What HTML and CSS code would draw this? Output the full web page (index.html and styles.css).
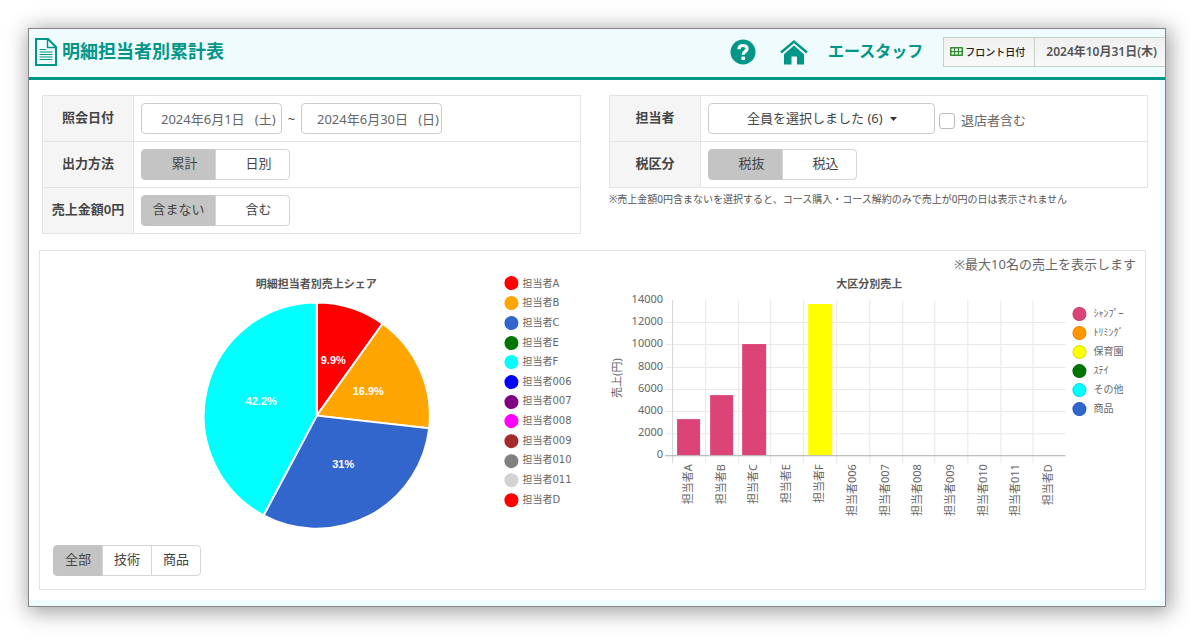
FILE: index.html
```html
<!DOCTYPE html>
<html lang="ja">
<head>
<meta charset="utf-8">
<meta name="viewport" content="width=device-width, initial-scale=1">
<title>明細担当者別累計表</title>
<link rel="stylesheet" href="styles.css">
</head>
<body>
<div class="window">
  <header class="header">
    <svg class="doc-icon" width="22" height="28" viewBox="0 0 22 28" fill="none" stroke="#009688" aria-hidden="true">
      <path d="M1 1H13L21 9V27H1Z" stroke-width="2"/>
      <path d="M12.500 1V9.500H21Z" fill="#fff" stroke-width="1.500"/>
      <path d="M4.500 11.500H11M4.500 14H17.500M4.500 16.500H17.500M4.500 19H17.500M4.500 21.500H17.500" stroke-width="1.200"/>
    </svg>
    <h1 class="title">明細担当者別累計表</h1>
    <nav class="tools">
      <a class="tool" href="#" aria-label="ヘルプ">
        <svg width="26" height="26" viewBox="0 0 26 26" fill="none" aria-hidden="true">
          <circle cx="13" cy="13" r="12.500" fill="#009688"/>
          <path d="M9 10.200C9 7.600 10.700 6.500 13 6.500C15.500 6.500 17.100 7.700 17.100 9.700C17.100 12.500 13.200 12.300 13.200 15.800" stroke="#fff" stroke-width="3.200"/>
          <rect x="11.300" y="17.500" width="3.800" height="3.400" rx="1" fill="#fff"/>
        </svg>
      </a>
      <a class="tool home" href="#" aria-label="ホーム">
        <svg width="28" height="26" viewBox="0 0 28 26" fill="none" aria-hidden="true">
          <path d="M1 13.500L14 2.500L27 13.500" stroke="#009688" stroke-width="2.400"/>
          <path d="M4 15.200L14 6.500L24 15.200V25.500H17V17.500H11.500V25.500H4Z" fill="#009688"/>
        </svg>
      </a>
      <a class="staff" href="#">エースタッフ</a>
      <div class="front-date">
        <span class="front-label">
          <svg width="13" height="9" viewBox="0 0 13 9" aria-hidden="true">
            <rect width="13" height="9" rx="1" fill="#2e8b2e"/>
            <path d="M1.500 1.500h2.500v2.500h-2.500zM5.200 1.500h2.600v2.500h-2.600zM9 1.500h2.500v2.500h-2.500zM1.500 5.200h2.500v2.300h-2.500zM5.200 5.200h2.600v2.300h-2.600zM9 5.200h2.500v2.300h-2.500z" fill="#fff"/>
          </svg>
          フロント日付
        </span>
        <span class="front-value">2024年10月31日(木)</span>
      </div>
    </nav>
  </header>

  <main class="main">
    <form class="filters">
      <table class="conditions">
        <tr>
          <th scope="row">照会日付</th>
          <td><div class="field">
            <input class="date from" type="text" aria-label="照会日付 開始" value="2024年6月1日   (土)">
            <span class="tilde">~</span>
            <input class="date to" type="text" aria-label="照会日付 終了" value="2024年6月30日   (日)">
          </div></td>
        </tr>
        <tr>
          <th scope="row">出力方法</th>
          <td><div class="toggle">
            <button class="short on" type="button" aria-pressed="true">累計</button><button class="short" type="button" aria-pressed="false">日別</button>
          </div></td>
        </tr>
        <tr>
          <th scope="row">売上金額0円</th>
          <td><div class="toggle">
            <button class="on" type="button" aria-pressed="true">含まない</button><button class="short" type="button" aria-pressed="false">含む</button>
          </div></td>
        </tr>
      </table>
      <div>
        <table class="conditions">
          <tr>
            <th scope="row"><label for="staff">担当者</label></th>
            <td><div class="field">
              <span class="select-wrap">
                <select id="staff" class="select"><option>全員を選択しました (6)</option></select>
                <svg class="caret" width="7" height="4" viewBox="0 0 7 4" aria-hidden="true"><path d="M0 0H7L3.500 4Z" fill="#333"/></svg>
              </span>
              <input id="retired" class="check" type="checkbox">
              <label class="check-label" for="retired">退店者含む</label>
            </div></td>
          </tr>
          <tr>
            <th scope="row">税区分</th>
            <td><div class="toggle">
              <button class="short on" type="button" aria-pressed="true">税抜</button><button class="short" type="button" aria-pressed="false">税込</button>
            </div></td>
          </tr>
        </table>
        <p class="hint">※売上金額0円含まないを選択すると、コース購入・コース解約のみで売上が0円の日は表示されません</p>
      </div>
    </form>

    <section class="charts">
      <p class="limit">※最大10名の売上を表示します</p>
      <div class="chart-grid">
        <svg class="chart" viewBox="0 0 552 271" role="img" aria-label="明細担当者別売上シェア">
          <text class="chart-title" x="276" y="14">明細担当者別売上シェア</text>
          <g class="slices">
            <path fill="#f00" d="M276.500 141.500V28.500A113 113 0 0 1 342.300 49.700Z"/>
            <path fill="#ffa500" d="M276.500 141.500L342.300 49.700A113 113 0 0 1 388.800 154.200Z"/>
            <path fill="#36c" d="M276.500 141.500L388.800 154.200A113 113 0 0 1 223.300 241.200Z"/>
            <path fill="#0ff" d="M276.500 141.500L223.300 241.200A113 113 0 0 1 276.500 28.500Z"/>
          </g>
          <g class="percent">
            <text x="293" y="90">9.9%</text>
            <text x="328" y="121">16.9%</text>
            <text x="303" y="194">31%</text>
            <text x="221" y="131">42.2%</text>
          </g>
          <g>
            <circle cx="471" cy="9" r="7" fill="#f00"/>
            <circle cx="471" cy="29" r="7" fill="#ffa500"/>
            <circle cx="471" cy="49" r="7" fill="#36c"/>
            <circle cx="471" cy="69" r="7" fill="#007500"/>
            <circle cx="471" cy="88" r="7" fill="#0ff"/>
            <circle cx="471" cy="108" r="7" fill="#00f"/>
            <circle cx="471" cy="128" r="7" fill="#800080"/>
            <circle cx="471" cy="147" r="7" fill="#f0f"/>
            <circle cx="471" cy="167" r="7" fill="#a52a2a"/>
            <circle cx="471" cy="187" r="7" fill="#808080"/>
            <circle cx="471" cy="206" r="7" fill="#d3d3d3"/>
            <circle cx="471" cy="226" r="7" fill="#f00"/>
          </g>
          <g class="legend">
            <text x="482" y="13">担当者A</text>
            <text x="482" y="32">担当者B</text>
            <text x="482" y="52">担当者C</text>
            <text x="482" y="72">担当者E</text>
            <text x="482" y="91">担当者F</text>
            <text x="482" y="111">担当者006</text>
            <text x="482" y="130">担当者007</text>
            <text x="482" y="150">担当者008</text>
            <text x="482" y="170">担当者009</text>
            <text x="482" y="189">担当者010</text>
            <text x="482" y="209">担当者011</text>
            <text x="482" y="229">担当者D</text>
          </g>
        </svg>
        <svg class="chart" viewBox="0 0 552 271" role="img" aria-label="大区分別売上">
          <text class="chart-title" x="276" y="14">大区分別売上</text>
          <path class="grid-line" d="M72 48.500H472M72 70.500H472M72 93.500H472M72 115.500H472M72 137.500H472M72 159.500H472M112.500 26V189M145.500 26V189M177.500 26V189M210.500 26V189M243.500 26V189M276.500 26V189M309.500 26V189M341.500 26V189M374.500 26V189M407.500 26V189M439.500 26V189"/>
          <path class="axis-y" d="M79.500 26V189"/>
          <g>
            <rect x="84" y="145" width="23" height="36" fill="#dc4477"/>
            <rect x="117" y="121" width="23" height="60" fill="#dc4477"/>
            <rect x="149" y="70" width="24" height="111" fill="#dc4477"/>
            <rect x="215" y="30" width="24" height="151" fill="#ff0"/>
          </g>
          <path class="axis-x" d="M72 181.500H472"/>
          <g class="ticks">
            <text x="70" y="29">14000</text>
            <text x="70" y="51">12000</text>
            <text x="70" y="73">10000</text>
            <text x="70" y="96">8000</text>
            <text x="70" y="118">6000</text>
            <text x="70" y="140">4000</text>
            <text x="70" y="162">2000</text>
            <text x="70" y="184">0</text>
          </g>
          <text class="axis-title" transform="translate(28 104) rotate(-90)">売上(円)</text>
          <g class="ticks">
            <text transform="translate(99 190) rotate(-90)">担当者A</text>
            <text transform="translate(132 190) rotate(-90)">担当者B</text>
            <text transform="translate(164 190) rotate(-90)">担当者C</text>
            <text transform="translate(197 190) rotate(-90)">担当者E</text>
            <text transform="translate(230 190) rotate(-90)">担当者F</text>
            <text transform="translate(263 190) rotate(-90)">担当者006</text>
            <text transform="translate(296 190) rotate(-90)">担当者007</text>
            <text transform="translate(328 190) rotate(-90)">担当者008</text>
            <text transform="translate(361 190) rotate(-90)">担当者009</text>
            <text transform="translate(394 190) rotate(-90)">担当者010</text>
            <text transform="translate(426 190) rotate(-90)">担当者011</text>
            <text transform="translate(459 190) rotate(-90)">担当者D</text>
          </g>
          <g>
            <circle cx="486" cy="40" r="6.500" fill="#dc4477" stroke="#c83a69"/>
            <circle cx="486" cy="59" r="6.500" fill="#ff9800" stroke="#e68900"/>
            <circle cx="486" cy="78" r="6.500" fill="#ff0" stroke="#e0e000"/>
            <circle cx="486" cy="97" r="6.500" fill="#007500" stroke="#006a00"/>
            <circle cx="486" cy="116" r="6.500" fill="#0ff" stroke="#00e0e0"/>
            <circle cx="486" cy="135" r="6.500" fill="#36c" stroke="#2858b8"/>
          </g>
          <g class="legend">
            <text x="500" y="43">ｼｬﾝﾌﾟｰ</text>
            <text x="500" y="62">ﾄﾘﾐﾝｸﾞ</text>
            <text x="500" y="81">保育園</text>
            <text x="500" y="100">ｽﾃｲ</text>
            <text x="500" y="119">その他</text>
            <text x="500" y="138">商品</text>
          </g>
        </svg>
      </div>
      <div class="toggle scope">
        <button class="on" type="button" aria-pressed="true">全部</button><button type="button" aria-pressed="false">技術</button><button type="button" aria-pressed="false">商品</button>
      </div>
    </section>
  </main>
</div>
</body>
</html>
```

FILE: styles.css
```css
* {
  box-sizing: border-box;
}

body {
  margin: 0;
  padding: 28px 34px 34px 28px;
  background: #fff;
  color: #444;
  font: 13px/20px "Noto Sans", "Noto Sans CJK JP", sans-serif;
}

button,
input,
select {
  font: inherit;
  color: inherit;
}

.window {
  border: 1px solid #858585;
  box-shadow: 2px 3px 20px 2px rgba(0, 0, 0, 0.38);
  background: #fff;
  overflow: hidden;
}

.header {
  display: flex;
  align-items: center;
  height: 51px;
  padding: 0 0 3px 6px;
  background: #effbfc;
  border-bottom: 3px solid #009688;
}

.title {
  margin: 0 0 0 5px;
  padding-bottom: 2px;
  color: #009688;
  font-size: 18px;
  line-height: 24px;
  font-weight: 700;
}

.tools {
  display: flex;
  align-items: center;
  margin-left: auto;
}

.tool {
  display: flex;
}

.home {
  margin-left: 24px;
}

.staff {
  margin: 0 20px;
  padding-bottom: 2px;
  color: #009688;
  font-size: 16px;
  font-weight: 700;
  text-decoration: none;
}

.front-date {
  display: flex;
  height: 30px;
  border: 1px solid #c5d3c5;
  border-right: 0;
  background: linear-gradient(#f0f0f0, #f9f9f9);
  font-size: 12px;
  line-height: 28px;
  white-space: nowrap;
}

.front-label {
  display: flex;
  align-items: center;
  gap: 2px;
  padding: 0 9px 0 6px;
  border-right: 1px solid #c5d3c5;
  color: #222;
  font-size: 10px;
  font-weight: 500;
}

.front-value {
  padding: 0 8px 0 11px;
  color: #555;
  font-weight: 600;
}

.main {
  padding: 15px 12px 10px 10px;
  border-right: 5px solid #effbfc;
  border-bottom: 6px solid #effbfc;
}

.filters {
  display: grid;
  grid-template-columns: 1fr 1fr;
  align-items: start;
  gap: 28px;
  padding-left: 3px;
}

.conditions {
  width: 100%;
  border-collapse: collapse;
}

.conditions th,
.conditions td {
  height: 46px;
  border: 1px solid #e3e3e3;
}

.conditions th {
  width: 91px;
  padding: 0 0 3px;
  background: #f5f5f5;
  font-weight: 600;
  white-space: nowrap;
}

.conditions td {
  padding: 0 7px;
}

.field {
  display: flex;
  align-items: center;
}

.date {
  width: 141px;
  height: 31px;
  border: 1px solid #ccc;
  border-radius: 4px;
  background: #fff;
  color: #666;
}

.from {
  padding: 0 0 1px 19px;
}

.to {
  padding: 0 0 1px 15px;
}

.tilde {
  width: 19px;
  text-align: center;
}

.toggle {
  display: flex;
}

.toggle button {
  width: 75px;
  height: 31px;
  padding: 0 0 3px;
  border: 1px solid #d5d5d5;
  background: #fff;
}

.toggle button + button {
  margin-left: -1px;
}

.toggle button:first-child {
  border-radius: 4px 0 0 4px;
}

.toggle button:last-child {
  border-radius: 0 4px 4px 0;
}

.toggle .short {
  padding-left: 12px;
}

.toggle .on {
  background: #c4c4c4;
  border-color: #c4c4c4;
}

.toggle.scope {
  margin-left: 13px;
}

.toggle.scope button {
  width: 50px;
}

.select-wrap {
  position: relative;
}

.select {
  display: block;
  width: 227px;
  height: 31px;
  padding: 0 0 2px 38px;
  border: 1px solid #ccc;
  border-radius: 4px;
  background: #fff;
  appearance: none;
}

.caret {
  position: absolute;
  top: 14px;
  left: 182px;
  pointer-events: none;
}

.check {
  width: 16px;
  height: 16px;
  margin: 4px 6px 0 4px;
  border: 1px solid #bbb;
  border-radius: 3px;
  background: #fff;
  appearance: none;
}

.check:checked {
  background: #009688;
}

.check-label {
  padding-top: 2px;
  color: #666;
}

.hint {
  margin: 1px 0 0;
  color: #555;
  font-size: 10px;
}

.charts {
  margin: 16px 2px 0 0;
  padding: 3px 0 13px;
  border: 1px solid #e3e3e3;
}

.limit {
  margin: 0 9px 0 0;
  color: #666;
  text-align: right;
}

.chart-grid {
  display: grid;
  grid-template-columns: 1fr 1fr;
}

.chart {
  display: block;
  width: 100%;
  font-size: 11px;
  fill: #666;
}

.chart-title {
  fill: #555;
  font-weight: 600;
  text-anchor: middle;
}

.slices {
  stroke: #fff;
  stroke-width: 2px;
}

.percent {
  fill: #fff;
  font-family: "Liberation Sans", Arial, sans-serif;
  font-weight: 700;
  text-anchor: middle;
}

.legend {
  font-family: "DejaVu Sans", "Noto Sans CJK JP", sans-serif;
  font-size: 10px;
}

.grid-line {
  stroke: #e8e8e8;
}

.axis-y {
  stroke: #d5d5d5;
}

.axis-x {
  stroke: #aaa;
}

.ticks {
  text-anchor: end;
}

.axis-title {
  text-anchor: middle;
}
```
